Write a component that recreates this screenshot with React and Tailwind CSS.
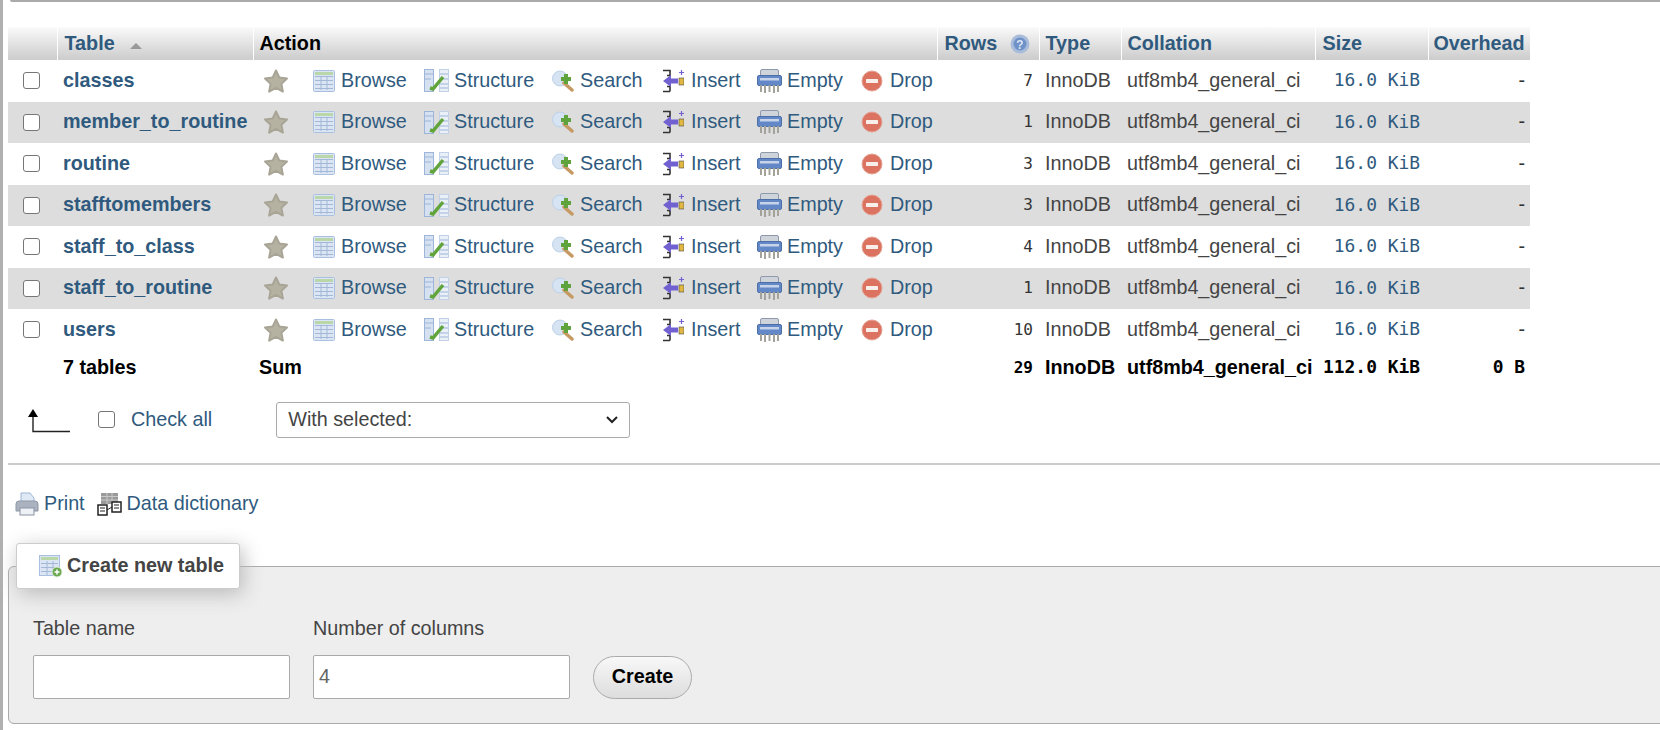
import React from "react";

const tables = [
  ["classes", 7],
  ["member_to_routine", 1],
  ["routine", 3],
  ["stafftomembers", 3],
  ["staff_to_class", 4],
  ["staff_to_routine", 1],
  ["users", 10],
];

function Star() {
  return (
    <svg width="26" height="26" viewBox="0 0 26 26" className="blur-[0.4px]">
      <path d="M13 2.500l3.300 7 7.700 1-5.600 5.400 1.500 7.700-6.900-3.800-6.900 3.800 1.500-7.700L2 10.500l7.700-1z" fill="#b5b2a2" stroke="#a8a596" strokeWidth="2" strokeLinejoin="round" />
    </svg>
  );
}

function BrowseIcon() {
  return (
    <svg width="22" height="22" viewBox="0 0 22 22" className="blur-[0.4px]">
      <rect x="0.500" y="0.500" width="21" height="21" rx="1" fill="#dbe5f3" stroke="#a9bfe0" />
      <rect x="2" y="2" width="18" height="3" fill="#b9d7a8" />
      <path d="M2 6.500h18M2 10.500h18M2 14.500h18M2 18.500h18M8 6v14M14 6v14" stroke="#a3b8d6" strokeWidth="1" fill="none" />
    </svg>
  );
}

function StructureIcon() {
  return (
    <svg width="25" height="23" viewBox="0 0 25 23" className="blur-[0.4px]">
      <rect x="0.500" y="0.500" width="9" height="22" fill="#d5e1f1" stroke="#9db5d8" />
      <rect x="15.500" y="0.500" width="9" height="22" fill="#eaf0f8" stroke="#c2d1e7" />
      <path d="M1 5h8M1 10h6M16 5h8M16 10h8M16 15h8M16 19h8" stroke="#9db5d8" fill="none" />
      <path d="M6 19l3 1L19 8" stroke="#62a43c" strokeWidth="3.500" fill="none" />
    </svg>
  );
}

function SearchIcon() {
  return (
    <svg width="22" height="22" viewBox="0 0 22 22" className="blur-[0.4px]">
      <circle cx="8" cy="8.500" r="7.500" fill="#d5e3f3" stroke="#bccfe6" />
      <path d="M12 13l8 7" stroke="#c69a63" strokeWidth="3.500" strokeLinecap="round" />
      <path d="M14 4v10M9 9h10" stroke="#5ea33c" strokeWidth="4" />
    </svg>
  );
}

function InsertIcon() {
  return (
    <svg width="22" height="24" viewBox="0 0 22 24" className="blur-[0.3px]">
      <path d="M1 1.500h7v5H5M8 22.500H1M5 17.500h3v5" stroke="#333" strokeWidth="1.600" fill="none" />
      <path d="M1 12l8-6v3.500h7v5H9V18z" fill="#7060d0" />
      <rect x="17" y="9" width="5" height="7" fill="#e0b740" stroke="#4a4a4a" strokeWidth="0.600" />
      <path d="M19.500 1v5M17 3.500h5" stroke="#7060d0" strokeWidth="1.200" />
    </svg>
  );
}

function EmptyIcon() {
  return (
    <svg width="25" height="24" viewBox="0 0 25 24" className="blur-[0.4px]">
      <rect x="3.500" y="0.500" width="18" height="8" rx="1.500" fill="#cfd4db" stroke="#8e99ab" />
      <rect x="0.500" y="6.500" width="24" height="10" rx="1.500" fill="#6288c8" stroke="#4d6fa8" />
      <rect x="3" y="9" width="19" height="2.500" fill="#c6d3e8" />
      <path d="M4 16v7M8 16v8M12.500 16v7M17 16v8M21 16v7" stroke="#a3a39c" strokeWidth="2" fill="none" />
    </svg>
  );
}

function DropIcon() {
  return (
    <svg width="22" height="22" viewBox="0 0 22 22" className="blur-[0.3px]">
      <circle cx="11" cy="11" r="10" fill="#dc7361" stroke="#e2a294" />
      <rect x="5" y="9" width="12" height="4" rx="0.500" fill="#f8eeea" />
    </svg>
  );
}

function HelpIcon() {
  return (
    <svg width="20" height="20" viewBox="0 0 20 20" className="blur-[0.3px]">
      <circle cx="10" cy="10" r="9.500" fill="#a9bcdb" />
      <circle cx="10" cy="10" r="6.500" fill="#6f93c8" />
      <text x="10" y="14.500" textAnchor="middle" fontSize="12" fontWeight="700" fill="#dfe7f4" fontFamily="Liberation Sans">?</text>
    </svg>
  );
}

function ActionLink({ icon, label, className }) {
  return (
    <span className={`flex items-center ${className}`}>
      {icon}
      <span>{label}</span>
    </span>
  );
}

function HeaderCell({ children, className }) {
  return <th className={`p-0 h-[33px] border-l border-white text-left font-bold ${className}`}>{children}</th>;
}

export default function App() {
  return (
    <div className="relative w-[1660px] h-[730px] overflow-hidden bg-white text-[#2f5a7e] text-[19.75px] font-['Liberation_Sans',Arial,sans-serif]">
      <div className="absolute left-0 top-0 w-[3px] h-full bg-[#b0b0b0]" />
      <div className="ml-[10px] h-[2px] rounded-bl-md border-b-2 border-[#aaaaaa]" />

      <table className="ml-[8px] mt-[25px] w-[1522px] table-fixed border-collapse">
        <colgroup>
          <col className="w-[49px]" />
          <col className="w-[196px]" />
          <col className="w-[684px]" />
          <col className="w-[102px]" />
          <col className="w-[82px]" />
          <col className="w-[194px]" />
          <col className="w-[113px]" />
          <col className="w-[102px]" />
        </colgroup>
        <thead>
          <tr className="bg-gradient-to-b from-[#fafafa] to-[#cccccc]">
            <th className="p-0 h-[33px]" />
            <HeaderCell className="pl-[7px]">
              <span className="flex items-center">
                Table
                <span className="ml-[15px] mt-[4px] w-0 h-0 border-x-[6px] border-x-transparent border-b-[6px] border-b-[#999999]" />
              </span>
            </HeaderCell>
            <HeaderCell className="pl-[6px] text-black">Action</HeaderCell>
            <HeaderCell className="pl-[7px]">
              <span className="flex items-center gap-[13px]">
                Rows
                <HelpIcon />
              </span>
            </HeaderCell>
            <HeaderCell className="pl-[6px]">Type</HeaderCell>
            <HeaderCell className="pl-[6px]">Collation</HeaderCell>
            <HeaderCell className="pl-[7px]">Size</HeaderCell>
            <HeaderCell className="pl-[5px]">Overhead</HeaderCell>
          </tr>
        </thead>
        <tbody>
          {tables.map(([name, rows], i) => (
            <tr key={name} className={`h-[41.5px] ${i % 2 ? "bg-[#dddddd]" : "bg-white"}`}>
              <td className="p-0">
                <span className="ml-[15px] block w-[17px] h-[17px] rounded-[3px] border border-[#767676] bg-white" />
              </td>
              <td className="p-0 pl-[6px] font-bold whitespace-nowrap">{name}</td>
              <td className="p-0 pl-[10px]">
                <div className="flex items-center">
                  <span className="w-[50px] flex items-center"><Star /></span>
                  <ActionLink icon={<BrowseIcon />} label="Browse" className="w-[111px] gap-[6px]" />
                  <ActionLink icon={<StructureIcon />} label="Structure" className="w-[128px] gap-[5px]" />
                  <ActionLink icon={<SearchIcon />} label="Search" className="w-[110px] gap-[6px]" />
                  <ActionLink icon={<InsertIcon />} label="Insert" className="w-[95px] gap-[7px]" />
                  <ActionLink icon={<EmptyIcon />} label="Empty" className="w-[104px] gap-[5px]" />
                  <ActionLink icon={<DropIcon />} label="Drop" className="w-[75px] gap-[7px]" />
                </div>
              </td>
              <td className="p-0 pr-[6px] text-right text-[#333333] font-['DejaVu_Sans_Mono',monospace] text-[16px]">{rows}</td>
              <td className="p-0 pl-[6px] text-[#444444]">InnoDB</td>
              <td className="p-0 pl-[6px] text-[#444444]">utf8mb4_general_ci</td>
              <td className="p-0 pr-[8px] text-right whitespace-nowrap font-['DejaVu_Sans_Mono',monospace] text-[17.9px]">16.0 KiB</td>
              <td className="p-0 pr-[5px] text-right text-[#333333]">-</td>
            </tr>
          ))}
          <tr className="h-[34px] font-bold text-black">
            <td className="p-0" />
            <td className="p-0 pl-[6px]">7 tables</td>
            <td className="p-0 pl-[6px]">Sum</td>
            <td className="p-0 pr-[6px] text-right font-['DejaVu_Sans_Mono',monospace] text-[16px]">29</td>
            <td className="p-0 pl-[6px]">InnoDB</td>
            <td className="p-0 pl-[6px] whitespace-nowrap">utf8mb4_general_ci</td>
            <td className="p-0 pr-[8px] text-right whitespace-nowrap font-['DejaVu_Sans_Mono',monospace] text-[17.9px]">112.0 KiB</td>
            <td className="p-0 pr-[5px] text-right font-['DejaVu_Sans_Mono',monospace] text-[17.9px]">0 B</td>
          </tr>
        </tbody>
      </table>

      <div className="mt-[17px] ml-[27px] flex items-center h-[36px]">
        <svg width="44" height="24" viewBox="0 0 44 24" className="mt-[2px]">
          <path d="M1 9L6 1l5 8z" fill="#000" transform="translate(0 -1)" />
          <path d="M6 8v14.500h37" stroke="#222" strokeWidth="1.400" fill="none" />
        </svg>
        <span className="ml-[27px] w-[17px] h-[17px] rounded-[3px] border border-[#767676] bg-white" />
        <span className="ml-[16px]">Check all</span>
        <div className="ml-[64px] w-[354px] h-[36px] rounded-[3px] border border-[#aaaaaa] bg-white pl-[11px] pr-[10px] flex items-center justify-between text-[#444444]">
          With selected:
          <svg width="14" height="10" viewBox="0 0 14 10"><path d="M2 2l5 5 5-5" stroke="#222" strokeWidth="2" fill="none" /></svg>
        </div>
      </div>

      <div className="mt-[25px] ml-[8px] h-[2px] bg-[#cccccc]" />

      <div className="mt-[26px] ml-[15px] flex items-center h-[26px]">
        <svg width="24" height="24" viewBox="0 0 24 24" className="blur-[0.3px]">
          <path d="M6 1h9l4 5v6H6z" fill="#dfe8f5" stroke="#9db5d8" />
          <path d="M1 12q0-3 3-3h16q3 0 3 3v7H1z" fill="#aab2bf" stroke="#8d97a6" />
          <rect x="5" y="16" width="14" height="7" fill="#eef2f7" stroke="#8a94a3" />
        </svg>
        <span className="ml-[5px]">Print</span>
        <svg width="25" height="24" viewBox="0 0 25 24" className="ml-[12px] blur-[0.3px]">
          <rect x="4" y="1" width="17" height="11" fill="#9a9a9a" />
          <path d="M4 4.500h17M4 8h17M10 1v11M15 1v11" stroke="#c9c9c9" fill="none" />
          <rect x="1" y="13" width="9" height="10" fill="#fff" stroke="#222" strokeWidth="1.500" />
          <rect x="15" y="10" width="9" height="10" fill="#fff" stroke="#222" strokeWidth="1.500" />
          <path d="M3 16h5M3 19h5M17 13h5M17 16h5M10 18l5-3" stroke="#222" fill="none" />
        </svg>
        <span className="ml-[5px]">Data dictionary</span>
      </div>

      <fieldset className="relative mt-[49px] ml-[8px] w-[1660px] h-[158px] rounded-l-md border border-[#aaaaaa] bg-[#eeeeee] pt-[48px] pl-[24px]">
        <div className="absolute left-[7px] top-[-24px] h-[46px] w-[224px] rounded-[3px] border border-[#cccccc] bg-white shadow-[3px_5px_20px_#bbbbbb] flex items-center pl-[22px] text-[#444444] font-bold">
          <svg width="24" height="24" viewBox="0 0 24 24" className="mr-[4px] blur-[0.3px]">
            <rect x="0.500" y="1.500" width="20" height="20" fill="#dbe5f3" stroke="#a9bfe0" />
            <rect x="2" y="3" width="17" height="3" fill="#b9d7a8" />
            <path d="M2 9.500h17M2 13.500h17M2 17.500h17M8 7v14M14 7v14" stroke="#a3b8d6" fill="none" />
            <circle cx="18" cy="18" r="5" fill="#6aa84f" stroke="#dfeedd" />
            <path d="M15.500 18h5M18 15.500v5" stroke="#fff" strokeWidth="1.500" />
          </svg>
          Create new table
        </div>
        <div className="flex items-end text-[#444444]">
          <div className="w-[280px]">
            <div className="h-[26px] leading-[26px]">Table name</div>
            <div className="mt-[14px] w-[257px] h-[44px] rounded-[2px] border border-[#aaaaaa] bg-white" />
          </div>
          <div className="w-[280px]">
            <div className="h-[26px] leading-[26px]">Number of columns</div>
            <div className="mt-[14px] w-[257px] h-[44px] rounded-[2px] border border-[#aaaaaa] bg-white flex items-center pl-[5px] text-[#666666]">4</div>
          </div>
          <div className="w-[99px] h-[43px] rounded-[22px] border border-[#aaaaaa] bg-gradient-to-b from-[#f8f8f8] to-[#dddddd] flex items-center justify-center font-bold text-black">Create</div>
        </div>
      </fieldset>
    </div>
  );
}
